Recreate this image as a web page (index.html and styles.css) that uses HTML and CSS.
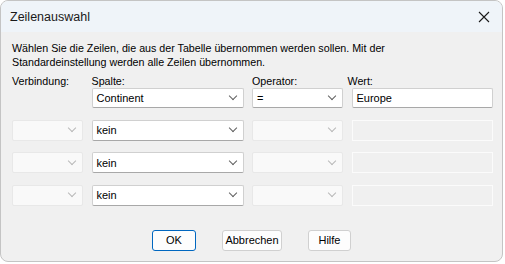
FILE: index.html
```html
<!DOCTYPE html>
<html>
<head>
    <title>Zeilenauswahl</title>
    <meta charset="utf-8">
    <link rel="stylesheet" href="styles.css">
</head>
<body>
    <div class="window">
        <div class="titlebar">
            <span class="title">Zeilenauswahl</span>
            <svg class="close" width="12" height="12" viewBox="0 0 12 12">
                <path d="M1 1 L11 11 M11 1 L1 11" stroke="#1a1a1a" stroke-width="1.1" fill="none"/>
            </svg>
        </div>
        <div class="content">
            <p class="desc">Wählen Sie die Zeilen, die aus der Tabelle übernommen werden sollen. Mit der<br>Standardeinstellung werden alle Zeilen übernommen.</p>

            <div class="grid labels">
                <div class="label">Verbindung:</div>
                <div class="label">Spalte:</div>
                <div class="label">Operator:</div>
                <div class="label label-wert">Wert:</div>
            </div>

            <div class="grid rows">
                <div></div>
                <div class="select">Continent<span class="chev"></span></div>
                <div class="select">=<span class="chev"></span></div>
                <div class="input">Europe</div>

                <div class="select disabled"><span class="chev"></span></div>
                <div class="select">kein<span class="chev"></span></div>
                <div class="select disabled"><span class="chev"></span></div>
                <div class="input disabled"></div>

                <div class="select disabled"><span class="chev"></span></div>
                <div class="select">kein<span class="chev"></span></div>
                <div class="select disabled"><span class="chev"></span></div>
                <div class="input disabled"></div>

                <div class="select disabled"><span class="chev"></span></div>
                <div class="select">kein<span class="chev"></span></div>
                <div class="select disabled"><span class="chev"></span></div>
                <div class="input disabled"></div>
            </div>

            <div class="buttons">
                <button class="btn btn-ok">OK</button>
                <button class="btn btn-cancel">Abbrechen</button>
                <button class="btn btn-help">Hilfe</button>
            </div>
        </div>
    </div>
</body>
</html>
```

FILE: styles.css
```css
body {
    margin: 0;
    background-color: #ffffff;
    font-family: "Liberation Sans", Arial, sans-serif;
    font-size: 10.7px;
    color: #000;
}

.window {
    width: 501px;
    height: 260px;
    border: 1px solid #c4c4c4;
    border-radius: 8px;
    background-color: #f0f0f0;
    overflow: hidden;
}

.titlebar {
    height: 31px;
    background-color: #eff4f9;
    display: flex;
    align-items: center;
    justify-content: space-between;
    padding: 0 9px 0 9px;
}

.title {
    font-size: 12.5px;
    color: #1a1a1a;
}

.close {
    margin-right: 3px;
}

.content {
    padding: 9px 11px 0 11px;
}

.desc {
    margin: 0;
    line-height: 14px;
}

.grid {
    display: grid;
    grid-template-columns: 71px 152px 91px 141px;
    column-gap: 8.5px;
}

.labels {
    margin-top: 5px;
    line-height: 14px;
}

.label-wert {
    margin-left: -4px;
}

.rows {
    margin-top: 0;
    grid-template-rows: 20px 21px 21px 21px;
    row-gap: 11.5px;
}

.select,
.input {
    position: relative;
    box-sizing: border-box;
    height: 100%;
    background-color: #fff;
    border: 1px solid #d0d0d0;
    border-bottom-color: #a8a8a8;
    border-radius: 2px;
    padding-left: 4px;
    font-size: 11px;
    display: flex;
    align-items: center;
}

.chev {
    position: absolute;
    right: 7px;
    top: 50%;
    width: 5px;
    height: 5px;
    margin-top: -5px;
    border-right: 1px solid #606060;
    border-bottom: 1px solid #606060;
    transform: rotate(45deg);
}

.select.disabled {
    background-color: #f9f9f9;
    border-color: #e8e8e8;
}

.select.disabled .chev {
    border-color: #b8b8b8;
}

.input.disabled {
    background-color: #f0f0f0;
    border: 1px solid #fbfbfb;
    border-radius: 0;
}

.buttons {
    display: flex;
    justify-content: center;
    gap: 26px;
    margin-top: 24px;
}

.btn {
    height: 21px;
    font-family: "Liberation Sans", Arial, sans-serif;
    font-size: 11px;
    background-color: #fdfdfd;
    border: 1px solid #d0d0d0;
    border-radius: 3px;
    padding: 0;
    color: #000;
}

.btn-ok {
    width: 44px;
    border-color: #0067c0;
}

.btn-cancel {
    width: 60px;
}

.btn-help {
    width: 43px;
}
```
